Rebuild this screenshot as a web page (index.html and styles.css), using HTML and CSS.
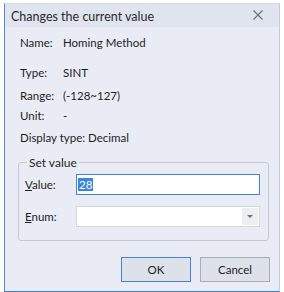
FILE: index.html
```html
<!DOCTYPE html>
<html>
<head>
<meta charset="utf-8">
<link rel="stylesheet" href="styles.css">
</head>
<body>
<div class="window">
  <div class="titlebar">
    <span class="title">Changes the current value</span>
    <svg class="close" width="10" height="10" viewBox="0 0 10 10"><path d="M0.5 0.5 L9.5 9.5 M9.5 0.5 L0.5 9.5" stroke="#6b6f78" stroke-width="1.1" fill="none"/></svg>
  </div>
  <div class="content">
    <div class="row r-name"><span class="lbl">Name:</span><span class="val">Homing Method</span></div>
    <div class="row r-type"><span class="lbl">Type:</span><span class="val">SINT</span></div>
    <div class="row r-range"><span class="lbl">Range:</span><span class="val">(-128~127)</span></div>
    <div class="row r-unit"><span class="lbl">Unit:</span><span class="val">-</span></div>
    <div class="row r-disp"><span class="lbl-wide">Display type:</span><span>Decimal</span></div>
    <fieldset class="group">
      <legend>Set value</legend>
      <div class="frow"><span class="flbl"><u>V</u>alue:</span><div class="input"><span class="sel">28</span></div></div>
      <div class="frow frow2"><span class="flbl"><u>E</u>num:</span><div class="combo"><span class="arrow"><svg width="6" height="4" viewBox="0 0 6 4"><path d="M0 0 H6 L3 3 Z" fill="#6d717a"/></svg></span></div></div>
    </fieldset>
    <div class="buttons">
      <div class="btn btn-ok">OK</div>
      <div class="btn">Cancel</div>
    </div>
  </div>
</div>
</body>
</html>
```
FILE: styles.css
```css
html, body { margin: 0; padding: 0; background: #ffffff; }
body { font-family: "Lato", "Noto Sans", sans-serif; font-size: 11.5px; color: #1e1e1e; }
.window {
  margin: 3px 0 0 4px;
  width: 274px;
  height: 287px;
  background: #e9ecf4;
  border-left: 1px solid #4d8ad0;
  border-right: 1px solid #b9cce6;
  border-top: 1px solid #d6dbe6;
  border-bottom: 1px solid #3b7fcc;
  display: flex;
  flex-direction: column;
}
.titlebar {
  height: 23px;
  background: #dfe4ee;
  display: flex;
  align-items: center;
  justify-content: space-between;
  padding: 0 16px 0 6px;
}
.title { font-size: 12.5px; color: #2b2b2b; margin-top: 1px; }
.close { margin-top: -2px; }
.content { padding: 0 0 0 15px; display: flex; flex-direction: column; }
.row { display: flex; align-items: center; height: 14px; line-height: 14px; }
.lbl { width: 43px; }
.lbl-wide { width: 68px; }
.r-name { margin-top: 9px; }
.r-type { margin-top: 16px; }
.r-range { margin-top: 9px; }
.r-unit { margin-top: 6px; }
.r-disp { margin-top: 8px; }
.group {
  margin: 11px 0 0 -2px;
  width: 251px;
  height: 85px;
  box-sizing: border-box;
  border: 1px solid #c4c9d3;
  border-radius: 3px;
  padding: 0 7px 0 6px;
}
.group legend { padding: 0 2px; margin-left: 2px; font-size: 12px; line-height: 13px; color: #1e1e1e; }
.frow { display: flex; align-items: center; height: 21px; margin-top: 5px; }
.frow2 { margin-top: 11px; }
.flbl { width: 51px; }
.input {
  width: 184px; height: 21px; box-sizing: border-box;
  background: #fff; border: 1px solid #3d86d6;
  display: flex; align-items: center; padding-left: 1px;
}
.sel { background: #3a86d8; color: #fff; line-height: 13px; padding: 0 1px; }
.combo {
  width: 184px; height: 21px; box-sizing: border-box;
  background: #fff; border: 1px solid #d3d7de;
  display: flex; justify-content: flex-end;
}
.arrow { width: 16px; background: #eceef2; display: flex; align-items: center; justify-content: center; margin: 1px; }
.buttons { display: flex; justify-content: flex-end; gap: 9px; padding-right: 9px; margin-top: 16px; }
.btn {
  width: 70px; height: 25px; box-sizing: border-box;
  background: #dde1e9; border: 1px solid #a9adb5;
  display: flex; align-items: center; justify-content: center; color: #1e1e1e;
}
.btn-ok { border-color: #3f86d0; }
```
